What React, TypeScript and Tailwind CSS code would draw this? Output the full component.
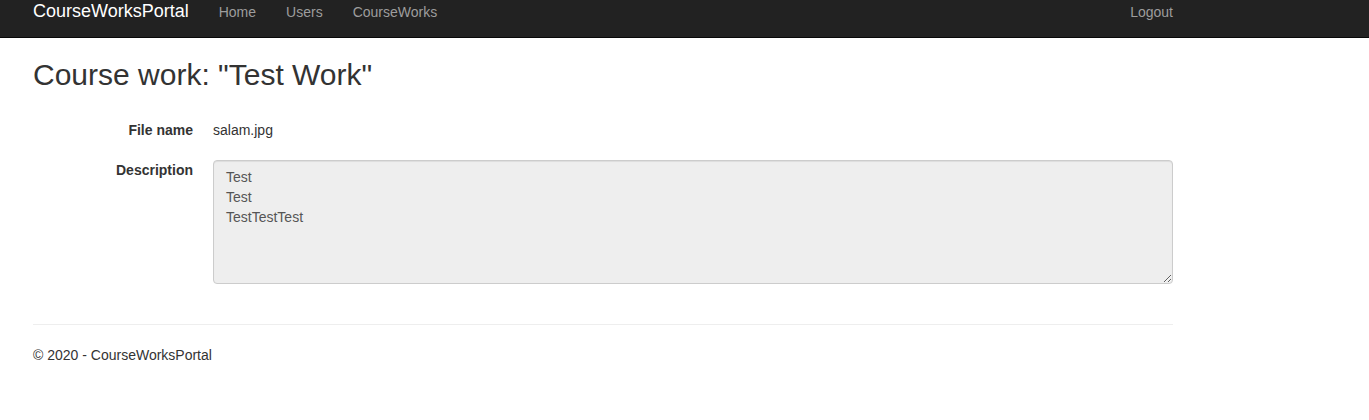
export default function App() {
  return (
    <div className="min-h-[420px] bg-white text-[14px] leading-[20px] text-[#333]" style={{ fontFamily: '"Liberation Sans", Arial, sans-serif' }}>
      <nav className="h-[38px] border-b border-[#080808] bg-[#222]">
        <div className="ml-[18px] flex w-[1170px] items-start justify-between px-[15px]">
          <div className="flex items-start">
            <a className="pr-[15px] pt-[1px] text-[18px] leading-[20px] text-white">CourseWorksPortal</a>
            <ul className="flex">
              <li><a className="block px-[15px] pt-[2px] text-[#9d9d9d]">Home</a></li>
              <li><a className="block px-[15px] pt-[2px] text-[#9d9d9d]">Users</a></li>
              <li><a className="block px-[15px] pt-[2px] text-[#9d9d9d]">CourseWorks</a></li>
            </ul>
          </div>
          <ul className="flex">
            <li><a className="block pl-[15px] pt-[2px] text-[#9d9d9d]">Logout</a></li>
          </ul>
        </div>
      </nav>

      <div className="ml-[18px] w-[1170px] px-[15px]">
        <h2 className="mt-[20px] text-[30px] leading-[33px] font-normal text-[#333]">Course work: "Test Work"</h2>

        <dl className="mt-[29px]">
          <div className="flex">
            <dt className="w-[160px] shrink-0 text-right font-bold">File name</dt>
            <dd className="ml-[20px]">salam.jpg</dd>
          </div>
          <div className="mt-[20px] flex">
            <dt className="w-[160px] shrink-0 text-right font-bold">Description</dt>
            <dd className="ml-[20px] flex-1">
              <textarea
                readOnly
                className="block h-[124px] w-full rounded-[4px] border border-[#ccc] bg-[#eee] px-[12px] py-[6px] text-[14px] leading-[20px] text-[#555] shadow-[inset_0_1px_1px_rgba(0,0,0,0.075)] outline-none"
                defaultValue={"Test\nTest\nTestTestTest"}
              />
            </dd>
          </div>
        </dl>

        <hr className="mt-[40px] border-t border-[#eee]" />
        <footer className="mt-[20px]">
          <p>© 2020 - CourseWorksPortal</p>
        </footer>
      </div>
    </div>
  )
}
